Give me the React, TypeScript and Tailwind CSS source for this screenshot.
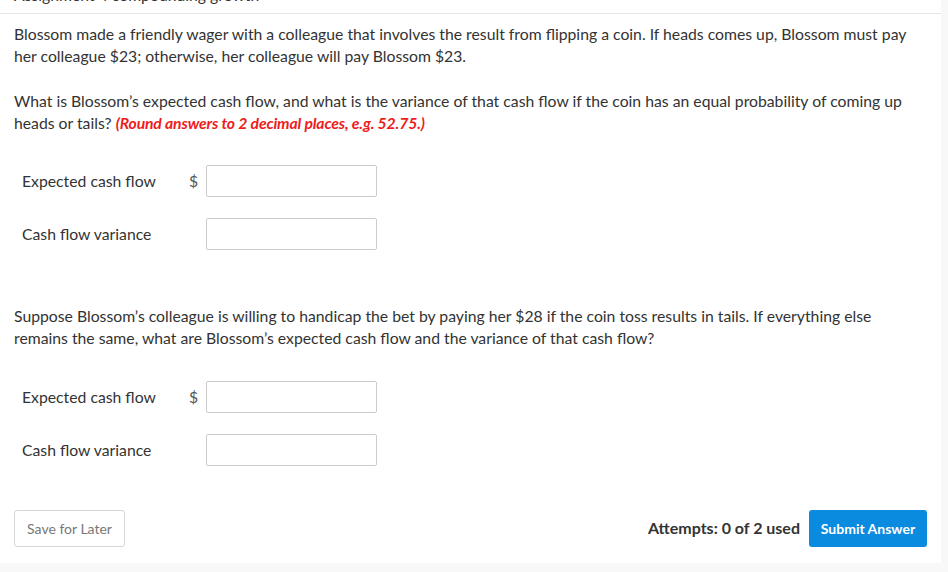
export default function App() {
  const Row = ({ label, dollar }: { label: string; dollar?: boolean }) => (
    <div className="flex items-center h-[32px]">
      <div className="w-[175px] pl-[8px] text-[#333]">{label}</div>
      <div className="w-[17px] text-[#555]">{dollar ? "$" : ""}</div>
      <div className="w-[171px] h-[32px] border border-[#ccc] rounded-[2px] bg-white" />
    </div>
  );
  return (
    <div className="w-[948px] h-[572px] bg-[#f8f8f8] overflow-hidden" style={{ fontFamily: "Lato, 'Open Sans', sans-serif" }}>
      <div className="w-[941px] h-[563px] bg-white text-[15.75px] leading-[22px] text-[#333]">
        <div className="h-[14px] border-b border-[#e6e6e6] overflow-hidden">
          <div className="-mt-[16px] pl-[14px] text-[#333]">Assignment 4 compounding growth</div>
        </div>
        <div className="px-[14px] pt-[9px]">
          <p>
            Blossom made a friendly wager with a colleague that involves the result from flipping a coin. If heads comes up, Blossom must pay her colleague $23; otherwise, her colleague will pay Blossom $23.
          </p>
          <p className="mt-[23px]">
            What is Blossom’s expected cash flow, and what is the variance of that cash flow if the coin has an equal probability of coming up heads or tails?{" "}
            <span className="text-[#ee1c1c] font-bold italic tracking-[-0.15px]">(Round answers to 2 decimal places, e.g. 52.75.)</span>
          </p>
          <div className="mt-[31px] flex flex-col gap-[21px]">
            <Row label="Expected cash flow" dollar />
            <Row label="Cash flow variance" />
          </div>
          <p className="mt-[55px]">
            Suppose Blossom’s colleague is willing to handicap the bet by paying her $28 if the coin toss results in tails. If everything else remains the same, what are Blossom’s expected cash flow and the variance of that cash flow?
          </p>
          <div className="mt-[32px] flex flex-col gap-[21px]">
            <Row label="Expected cash flow" dollar />
            <Row label="Cash flow variance" />
          </div>
          <div className="mt-[44px] flex items-center">
            <button className="h-[37px] w-[111px] border border-[#d6d6d6] rounded-[3px] text-[14px] text-[#777] bg-white">Save for Later</button>
            <div className="flex-1" />
            <span className="text-[16px] font-bold text-[#333] mr-[9px] -mt-[2px]">Attempts: 0 of 2 used</span>
            <button className="h-[37px] w-[118px] rounded-[3px] bg-[#0b8be0] text-white text-[14px] font-bold">Submit Answer</button>
          </div>
        </div>
      </div>
    </div>
  );
}
